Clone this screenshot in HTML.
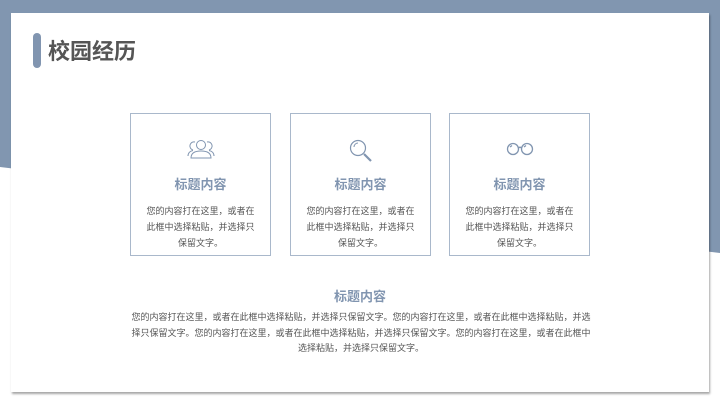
<!DOCTYPE html>
<html><head><meta charset="utf-8"><style>
*{margin:0;padding:0;box-sizing:border-box}
body{width:720px;height:405px;position:relative;overflow:hidden;background:#fff;font-family:"Liberation Sans","Noto Sans CJK SC",sans-serif}
.bg{position:absolute;left:0;top:0}
.card{position:absolute;left:11px;top:13px;width:698px;height:379px;background:#fff;box-shadow:1px 2px 2px rgba(0,0,0,.35)}
.bar{position:absolute;left:33px;top:33px;width:8px;height:35px;border-radius:4px;background:#8195b0}
.title{position:absolute;left:48px;top:34px;font-size:22px;font-weight:bold;color:#555}
.box{position:absolute;top:113px;width:141px;height:143px;border:1px solid #a9b8cb;text-align:center}
.box svg{position:absolute;left:50%;top:24px;transform:translateX(-50%)}
.h{position:absolute;left:0;right:0;top:60px;font-size:13px;font-weight:bold;color:#8195b0}
.t{position:absolute;left:0;right:0;top:89px;font-size:9px;line-height:16px;color:#555}
.bh{position:absolute;left:0;width:720px;top:286px;text-align:center;font-size:13px;font-weight:bold;color:#8195b0}
.bt{position:absolute;left:130px;width:462px;top:310px;font-size:9px;line-height:15.5px;color:#555;text-align:center}
</style></head><body>
<svg class="bg" width="720" height="405"><polygon points="0,0 720,0 720,253 0,167" fill="#8196b0"/></svg>
<div class="card"></div>
<div class="bar"></div>
<div class="title">校园经历</div>

<div class="box" style="left:130px">
<svg width="30" height="22" viewBox="0 0 30 22" fill="none" stroke="#8195b0" stroke-width="1"><circle cx="15" cy="7" r="4.5"/><path d="M5 20c0-5 4-7 10-7s10 2 10 7z"/><path d="M9 4a4 4 0 0 0-2 8M2 18c0-3 2-5 5-5.5M21 4a4 4 0 0 1 2 8M28 18c0-3-2-5-5-5.5"/></svg>
<div class="h">标题内容</div>
<div class="t">您的内容打在这里，或者在<br>此框中选择粘贴，并选择只<br>保留文字。</div></div>

<div class="box" style="left:290px">
<svg width="26" height="26" viewBox="0 0 26 26" fill="none" stroke="#8195b0"><circle cx="10" cy="10" r="7.5" stroke-width="1.2"/><path d="M6 9a4 4 0 0 1 4-4" stroke-width="1"/><path d="M16 16l7 7" stroke-width="2.2"/></svg>
<div class="h">标题内容</div>
<div class="t">您的内容打在这里，或者在<br>此框中选择粘贴，并选择只<br>保留文字。</div></div>

<div class="box" style="left:449px">
<svg width="30" height="14" viewBox="0 0 30 14" fill="none" stroke="#8195b0" stroke-width="1.3" style="top:28px"><circle cx="8" cy="7" r="5.5"/><circle cx="22" cy="7" r="5.5"/><path d="M13.5 6q1.5-1.5 3 0M5 5l2-1.5M19 5l2-1.5"/></svg>
<div class="h">标题内容</div>
<div class="t">您的内容打在这里，或者在<br>此框中选择粘贴，并选择只<br>保留文字。</div></div>

<div class="bh">标题内容</div>
<div class="bt">您的内容打在这里，或者在此框中选择粘贴，并选择只保留文字。您的内容打在这里，或者在此框中选择粘贴，并选择只保留文字。您的内容打在这里，或者在此框中选择粘贴，并选择只保留文字。您的内容打在这里，或者在此框中选择粘贴，并选择只保留文字。</div>
</body></html>
